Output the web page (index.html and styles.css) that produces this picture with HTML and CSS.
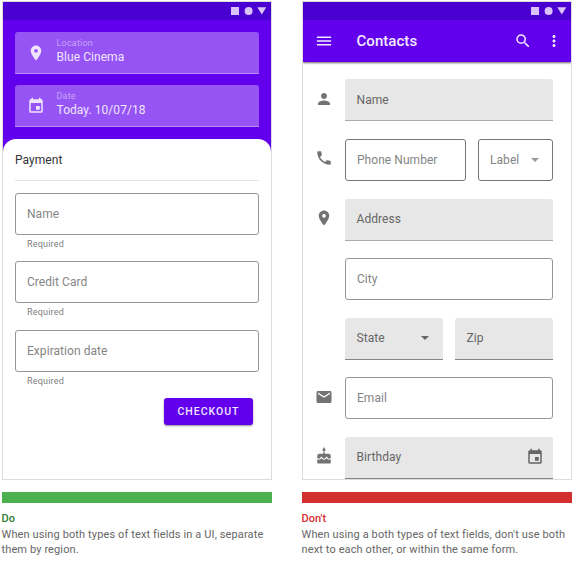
FILE: index.html
```
<!DOCTYPE html>
<html lang="en">
<head>
<meta charset="utf-8">
<title>Text fields</title>
<link rel="stylesheet" href="styles.css">
</head>
<body>
<svg class="defs" width="0" height="0" aria-hidden="true">
<symbol id="status" viewBox="0 0 36 8"><path d="M0 0h8v8H0z"/><circle cx="17.6" cy="4" r="4"/><path d="M26.3 .3h9L30.8 7.5z"/></symbol>
<symbol id="place" viewBox="0 0 24 24"><path d="M12 2C8.13 2 5 5.13 5 9c0 5.25 7 13 7 13s7-7.75 7-13c0-3.87-3.13-7-7-7zm0 9.5a2.5 2.5 0 0 1 0-5 2.5 2.5 0 0 1 0 5z"/></symbol>
<symbol id="event" viewBox="0 0 24 24"><path d="M17 12h-5v5h5v-5zM16 1v2H8V1H6v2H5c-1.11 0-2 .9-2 2v14a2 2 0 0 0 2 2h14c1.1 0 2-.9 2-2V5c0-1.1-.9-2-2-2h-1V1h-2zm3 18H5V8h14v11z"/></symbol>
<symbol id="person" viewBox="0 0 24 24"><path d="M12 12c2.21 0 4-1.79 4-4s-1.79-4-4-4-4 1.79-4 4 1.79 4 4 4zm0 2c-2.67 0-8 1.34-8 4v2h16v-2c0-2.66-5.33-4-8-4z"/></symbol>
<symbol id="phone" viewBox="0 0 24 24"><path d="M6.62 10.79c1.44 2.83 3.76 5.14 6.59 6.59l2.2-2.2c.27-.27.67-.36 1.02-.24 1.12.37 2.33.57 3.57.57.55 0 1 .45 1 1V20c0 .55-.45 1-1 1-9.39 0-17-7.61-17-17 0-.55.45-1 1-1h3.5c.55 0 1 .45 1 1 0 1.25.2 2.45.57 3.57.11.35.03.74-.25 1.02l-2.2 2.2z"/></symbol>
<symbol id="email" viewBox="0 0 24 24"><path d="M20 4H4c-1.1 0-1.99.9-1.99 2L2 18c0 1.1.9 2 2 2h16c1.1 0 2-.9 2-2V6c0-1.1-.9-2-2-2zm0 4l-8 5-8-5V6l8 5 8-5v2z"/></symbol>
<symbol id="cake" viewBox="0 0 24 24"><path d="M12 6c1.11 0 2-.9 2-2 0-.38-.1-.73-.29-1.03L12 0l-1.71 2.97c-.19.3-.29.65-.29 1.03 0 1.1.9 2 2 2zm4.6 9.99l-1.07-1.07-1.08 1.07c-1.3 1.3-3.58 1.31-4.89 0l-1.07-1.07-1.09 1.07C6.75 16.64 5.88 17 4.96 17c-.73 0-1.4-.23-1.96-.61V21c0 .55.45 1 1 1h16c.55 0 1-.45 1-1v-4.61c-.56.38-1.23.61-1.96.61-.92 0-1.79-.36-2.44-1.01zM18 9h-5V7h-2v2H6c-1.66 0-3 1.34-3 3v1.54c0 1.08.88 1.96 1.96 1.96.52 0 1.02-.2 1.38-.57l2.14-2.13 2.13 2.13c.74.74 2.03.74 2.77 0l2.14-2.13 2.13 2.13c.37.37.86.57 1.38.57 1.08 0 1.96-.88 1.96-1.96V12c.01-1.66-1.33-3-2.99-3z"/></symbol>
<symbol id="menu" viewBox="0 0 24 24"><path d="M2.5 18h19v-2h-19v2zm0-5h19v-2h-19v2zm0-7v2h19V6h-19z"/></symbol>
<symbol id="search" viewBox="0 0 24 24"><path d="M15.5 14h-.79l-.28-.27A6.47 6.47 0 0 0 16 9.5 6.5 6.5 0 1 0 9.5 16c1.61 0 3.09-.59 4.23-1.57l.27.28v.79l5 4.99L20.49 19l-4.99-5zm-6 0C7.01 14 5 11.99 5 9.5S7.01 5 9.5 5 14 7.01 14 9.5 11.99 14 9.5 14z"/></symbol>
<symbol id="more" viewBox="0 0 24 24"><path d="M12 8c1.1 0 2-.9 2-2s-.9-2-2-2-2 .9-2 2 .9 2 2 2zm0 2c-1.1 0-2 .9-2 2s.9 2 2 2 2-.9 2-2-.9-2-2-2zm0 6c-1.1 0-2 .9-2 2s.9 2 2 2 2-.9 2-2-.9-2-2-2z"/></symbol>
<symbol id="arrow" viewBox="0 0 8 4"><path d="M0 0h8L4 4z"/></symbol>
</svg>
<main class="examples">
  <section class="example">
    <div class="screen">
      <div class="status"><svg class="status-icons"><use href="#status"/></svg></div>
      <div class="summary">
        <div class="tinted"><svg class="icon"><use href="#place"/></svg><div class="stack"><span class="caption">Location</span><span class="value">Blue Cinema</span></div></div>
        <div class="tinted"><svg class="icon"><use href="#event"/></svg><div class="stack"><span class="caption">Date</span><span class="value">Today. 10/07/18</span></div></div>
      </div>
      <div class="sheet">
        <h2 class="heading">Payment</h2>
        <div class="payment-field"><div class="field outlined">Name</div><span class="helper">Required</span></div>
        <div class="payment-field"><div class="field outlined">Credit Card</div><span class="helper">Required</span></div>
        <div class="payment-field"><div class="field outlined">Expiration date</div><span class="helper">Required</span></div>
        <button class="checkout">CHECKOUT</button>
      </div>
    </div>
    <div class="rule do"></div>
    <div class="verdict do-text">Do</div>
    <p class="note">When using both types of text fields in a UI, separate<br>them by region.</p>
  </section>
  <section class="example">
    <div class="screen">
      <div class="status"><svg class="status-icons"><use href="#status"/></svg></div>
      <header class="appbar"><svg class="icon"><use href="#menu"/></svg><h2 class="title">Contacts</h2><svg class="icon search"><use href="#search"/></svg><svg class="icon more"><use href="#more"/></svg></header>
      <div class="contacts">
        <div class="row"><svg class="icon"><use href="#person"/></svg><div class="field filled light">Name</div></div>
        <div class="row"><svg class="icon"><use href="#phone"/></svg><div class="field outlined dark">Phone Number</div><div class="field outlined dark label">Label<svg class="arrow"><use href="#arrow"/></svg></div></div>
        <div class="row"><svg class="icon"><use href="#place"/></svg><div class="field filled light">Address</div></div>
        <div class="row"><span class="icon"></span><div class="field outlined">City</div></div>
        <div class="row"><span class="icon"></span><div class="field filled">State<svg class="arrow"><use href="#arrow"/></svg></div><div class="field filled">Zip</div></div>
        <div class="row"><svg class="icon"><use href="#email"/></svg><div class="field outlined">Email</div></div>
        <div class="row"><svg class="icon"><use href="#cake"/></svg><div class="field filled">Birthday<svg class="icon calendar"><use href="#event"/></svg></div></div>
      </div>
    </div>
    <div class="rule dont"></div>
    <div class="verdict dont-text">Don't</div>
    <p class="note">When using a both types of text fields, don't use both<br>next to each other, or within the same form.</p>
  </section>
</main>
</body>
</html>
```
FILE: styles.css
```
* { box-sizing: border-box; }
body { margin: 0; background: #fff; font-family: Roboto, "Liberation Sans", sans-serif; font-size: 12px; color: #666; }
h2, p { margin: 0; }
svg { display: block; fill: currentColor; }
.defs { position: absolute; }
.examples { display: flex; gap: 30px; padding: 1px 0 0 2px; }
.example { width: 270px; flex: none; }
.screen { height: 479px; border: 1px solid #dcdcdc; overflow: hidden; display: flex; flex-direction: column; }
.status { height: 18px; flex: none; background: #4a00d1; color: #dac3fb; display: flex; justify-content: flex-end; padding: 5px 4px 0 0; }
.status-icons { width: 36px; height: 8px; }
.icon { width: 18px; height: 18px; flex: none; }

.summary { background: #6200ee; height: 131px; flex: none; padding: 12px 12px 0; display: flex; flex-direction: column; gap: 11px; }
.tinted { height: 42px; background: #9654f4; border-bottom: 1px solid #b98df8; border-radius: 3px 3px 0 0; display: flex; align-items: center; padding-left: 12px; gap: 11.5px; color: #efe5fd; }
.stack { display: flex; flex-direction: column; margin-top: -2px; }
.caption { font-size: 9px; line-height: 11px; letter-spacing: .2px; color: #c7a5fa; }
.value { line-height: 17px; letter-spacing: .06px; }
.sheet { background: #fff; border-radius: 13px 13px 0 0; margin-top: -12px; padding: 0 12px; flex: 1; display: flex; flex-direction: column; }
.heading { height: 42px; line-height: 42px; border-bottom: 1px solid #e4e4e4; font-size: 12px; font-weight: 400; letter-spacing: .05px; color: #333; margin-bottom: 11.6px; flex: none; }
.field { height: 42px; flex: 1; border-radius: 3px; padding: 0 11px; display: flex; align-items: center; justify-content: space-between; letter-spacing: .05px; }
.outlined { border: 1px solid #969696; color: #858585; }
.dark { border-color: #777; }
.filled { background: #e7e7e7; border-bottom: 1px solid #858585; border-radius: 3px 3px 0 0; padding: 0 12px 0 11.6px; color: #666; }
.light { border-bottom-color: #aaa; }
.payment-field { height: 68.5px; flex: none; }
.helper { display: block; padding: 3px 0 0 12px; font-size: 9px; line-height: 12px; letter-spacing: .2px; color: #808080; }
.checkout { align-self: flex-end; margin: 0 6px 0 0; width: 89px; height: 27px; padding: 0; border: 0; border-radius: 3px; background: #6200ee; color: #efe5fd; font: 500 10.5px Roboto, sans-serif; letter-spacing: 1px; box-shadow: 0 1px 2px rgba(0,0,0,.45); }

.appbar { height: 42px; flex: none; background: #6200ee; color: #f2eafd; display: flex; align-items: center; padding: 0 8px 0 12px; box-shadow: 0 1px 2px rgba(0,0,0,.6); }
.title { font-size: 15px; font-weight: 500; letter-spacing: .05px; margin-left: 23.5px; flex: 1; }
.search { margin-right: 13px; }
.contacts { padding: 17.4px 18px 0 12px; display: flex; flex-direction: column; gap: 17.6px; }
.row { height: 42px; flex: none; display: flex; gap: 12px; }
.row > .icon { margin-top: 10.5px; color: #737373; }
.label { flex: none; width: 75px; }
.label .arrow { color: #999; margin-right: 2px; }
.arrow { width: 8px; height: 4px; margin-right: 2px; }
.calendar { margin-right: -3px; }

.rule { height: 11px; margin-top: 12px; }
.do { background: #4caf50; }
.dont { background: #d32f2f; }
.verdict { line-height: 16px; margin: 8px 0 0 -.5px; font-size: 11px; font-weight: 500; }
.do-text { color: #2e7d32; }
.dont-text { color: #d32f2f; }
.note { font-size: 11px; line-height: 15px; letter-spacing: .12px; white-space: nowrap; margin-left: -.5px; }
```
